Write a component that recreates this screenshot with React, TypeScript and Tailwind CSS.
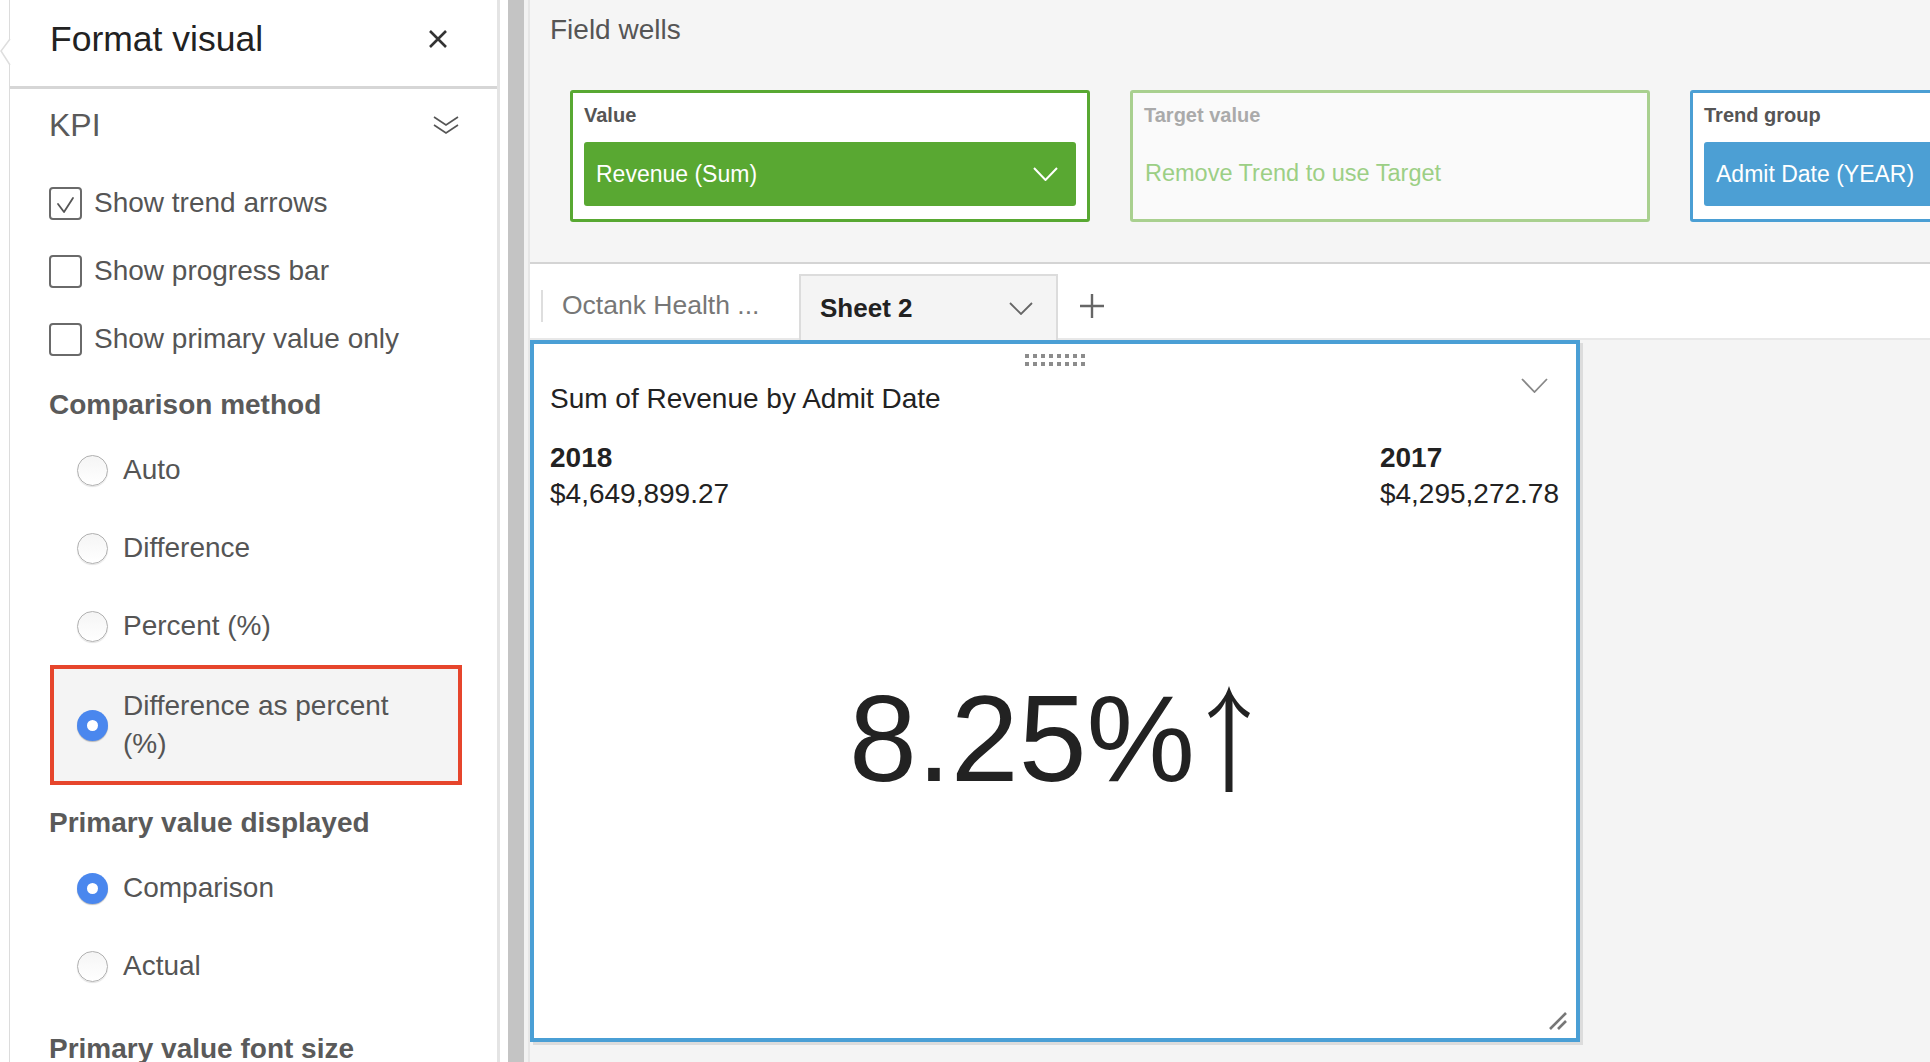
import React from 'react';

const CheckBox: React.FC<{ checked?: boolean; label: string }> = ({ checked, label }) => (
  <div className="flex h-[68px] shrink-0 items-center pl-[40px]">
    <span className="flex h-[33px] w-[33px] items-center justify-center rounded-[4px] border-2 border-[#6a6a6a] bg-white">
      {checked && (
        <svg width="29" height="29" viewBox="0 0 29 29" fill="none">
          <path d="M7 15 L13 23 L22 9" stroke="#555" strokeWidth="1.8" strokeLinecap="round" strokeLinejoin="round" />
        </svg>
      )}
    </span>
    <span className="ml-[12px] text-[28px] leading-[32px] text-[#555]">{label}</span>
  </div>
);

const Radio: React.FC<{ selected?: boolean }> = ({ selected }) =>
  selected ? (
    <span className="flex h-[31px] w-[31px] shrink-0 items-center justify-center rounded-full bg-[#4a87ee] shadow-[0_1px_1px_rgba(0,0,0,0.25)]">
      <span className="h-[11px] w-[11px] rounded-full bg-white" />
    </span>
  ) : (
    <span className="h-[31px] w-[31px] shrink-0 rounded-full border border-[#b0b0b0] bg-linear-to-b from-[#f5f5f5] to-white shadow-[0_1px_1px_rgba(0,0,0,0.12)]" />
  );

const RadioRow: React.FC<{ selected?: boolean; label: string }> = ({ selected, label }) => (
  <div className="flex h-[78px] shrink-0 items-center pl-[68px]">
    <Radio selected={selected} />
    <span className="ml-[15px] text-[28px] leading-[32px] text-[#555]">{label}</span>
  </div>
);

const SectionTitle: React.FC<{ children: React.ReactNode; className?: string }> = ({ children, className }) => (
  <div className={`flex shrink-0 items-center pl-[40px] text-[28px] font-bold leading-[32px] text-[#5a5a5a] ${className ?? ''}`}>{children}</div>
);

const Chevron: React.FC<{ color: string; w?: number; h?: number; sw?: number }> = ({ color, w = 24, h = 13, sw = 2 }) => (
  <svg width={w} height={h} viewBox={`0 0 ${w} ${h}`} fill="none">
    <path d={`M1 1 L${w / 2} ${h - 1} L${w - 1} 1`} stroke={color} strokeWidth={sw} strokeLinejoin="miter" />
  </svg>
);

const FieldWell: React.FC<{
  label: string;
  border: string;
  bg: string;
  labelColor: string;
  children: React.ReactNode;
}> = ({ label, border, bg, labelColor, children }) => (
  <div className={`flex h-[132px] w-[520px] shrink-0 flex-col rounded-[3px] border-[3px] px-[11px] pt-[10px] ${border} ${bg}`}>
    <div className={`text-[20px] font-bold leading-[24px] ${labelColor}`}>{label}</div>
    <div className="mt-[15px] h-[64px]">{children}</div>
  </div>
);

const App: React.FC = () => {
  return (
    <div className="flex h-[1062px] w-[1930px] overflow-hidden bg-white font-['Liberation_Sans',Arial,sans-serif]">
      {/* format visual panel */}
      <aside className="relative w-[508px] shrink-0 overflow-hidden bg-white">
        <svg className="absolute left-0 top-[38px] z-10" width="11" height="28" viewBox="0 0 11 28" fill="none">
          <path d="M10 1 L1 13 L10 27" stroke="#dedede" strokeWidth="1.5" fill="white" />
        </svg>
        <div className="ml-[9px] flex h-full w-[491px] flex-col border-l border-r-[3px] border-l-[#dcdcdc] border-r-[#e4e4e4]">
          <div className="flex h-[89px] shrink-0 items-center justify-between border-b-[3px] border-[#d6d6d6] pb-[8px] pl-[40px] pr-[49px]">
            <span className="text-[35.5px] leading-[40px] text-[#222]">Format visual</span>
            <svg width="20" height="18" viewBox="0 0 20 18" fill="none">
              <path d="M2 1 L18 17 M18 1 L2 17" stroke="#333" strokeWidth="2.6" />
            </svg>
          </div>

          <div className="-ml-px flex h-[80px] shrink-0 items-center justify-between pb-[8px] pl-[40px] pr-[38px]">
            <span className="text-[32px] leading-[36px] text-[#5a5a5a]">KPI</span>
            <svg width="26" height="21" viewBox="0 0 26 21" fill="none">
              <path d="M1 2 L13 10 L25 2 M1 10 L13 18 L25 10" stroke="#555" strokeWidth="1.6" />
            </svg>
          </div>

          <div className="-ml-px flex shrink-0 flex-col">
            <CheckBox checked label="Show trend arrows" />
            <CheckBox label="Show progress bar" />
            <CheckBox label="Show primary value only" />

            <SectionTitle className="h-[58px] pb-[2px] pt-[8px]">Comparison method</SectionTitle>
            <RadioRow label="Auto" />
            <RadioRow label="Difference" />
            <RadioRow label="Percent (%)" />

            <div className="ml-[41px] flex h-[120px] w-[412px] shrink-0 items-center border-4 border-[#e6452c] bg-[#f4f4f4] pl-[23px]">
              <Radio selected />
              <span className="ml-[15px] text-[28px] leading-[38px] text-[#555]">
                Difference as percent
                <br />
                (%)
              </span>
            </div>

            <SectionTitle className="h-[64px] pt-[12px]">Primary value displayed</SectionTitle>
            <RadioRow selected label="Comparison" />
            <RadioRow label="Actual" />
            <SectionTitle className="h-[88px]">Primary value font size</SectionTitle>
          </div>
        </div>
      </aside>

      {/* splitter */}
      <div className="w-[16px] shrink-0 bg-[#c4c4c4]" />
      <div className="w-[4px] shrink-0 bg-[#f2f2f2]" />

      <main className="flex min-w-0 flex-1 flex-col border-l-2 border-[#e6e6e6] bg-[#f4f4f4]">
        {/* field wells */}
        <section className="h-[264px] shrink-0 border-b-2 border-[#d4d4d4] bg-[#f5f5f5]">
          <div className="pl-[20px] pt-[14px] text-[28px] leading-[32px] text-[#555]">Field wells</div>
          <div className="mt-[44px] flex gap-[40px] pl-[40px]">
            <FieldWell label="Value" border="border-[#58a832]" bg="bg-white" labelColor="text-[#555]">
              <div className="flex h-full items-center justify-between rounded-[3px] bg-[#59a832] pl-[12px] pr-[18px]">
                <span className="text-[23px] text-white">Revenue (Sum)</span>
                <Chevron color="#fff" w={25} h={14} sw={2} />
              </div>
            </FieldWell>
            <FieldWell label="Target value" border="border-[#a9d08f]" bg="bg-[#fafafa]" labelColor="text-[#aaa]">
              <div className="flex h-full items-center pl-[1px]">
                <span className="text-[23.5px] text-[#9ccf85]">Remove Trend to use Target</span>
              </div>
            </FieldWell>
            <FieldWell label="Trend group" border="border-[#4b9fd4]" bg="bg-white" labelColor="text-[#555]">
              <div className="flex h-full items-center rounded-[3px] bg-[#4c9fd4] pl-[12px]">
                <span className="text-[23px] text-white">Admit Date (YEAR)</span>
              </div>
            </FieldWell>
          </div>
        </section>

        {/* sheet tabs */}
        <div className="flex h-[76px] shrink-0 items-end bg-white">
          <div className="flex h-[66px] w-[269px] items-center border-b-2 border-[#e8e8e8]">
            <span className="ml-[11px] h-[32px] w-[2px] bg-[#dedede]" />
            <span className="ml-[19px] text-[26.5px] text-[#777]">Octank Health ...</span>
          </div>
          <div className="flex h-[66px] w-[259px] items-center justify-between border-2 border-b-0 border-[#dcdcdc] bg-[#f4f4f4] pl-[19px] pr-[23px]">
            <span className="text-[26px] font-bold text-[#222]">Sheet 2</span>
            <Chevron color="#666" w={24} h={13} sw={1.8} />
          </div>
          <div className="flex h-[66px] flex-1 items-center border-b-2 border-[#e8e8e8] pl-[21px]">
            <svg width="26" height="26" viewBox="0 0 26 26" fill="none">
              <path d="M13 1 V25 M1 13 H25" stroke="#666" strokeWidth="2.4" />
            </svg>
          </div>
        </div>

        {/* canvas */}
        <div className="flex-1 bg-[#f4f4f4]">
          <div className="relative flex h-[702px] w-[1050px] flex-col border-4 border-[#4a9fd5] bg-white shadow-[3px_3px_0_0_#dcdcdc]">
            <div className="absolute left-1/2 top-[10px] grid -translate-x-1/2 grid-cols-8 gap-[4px]">
              {Array.from({ length: 16 }).map((_, i) => (
                <span key={i} className="h-[4px] w-[4px] bg-[#8c8c8c]" />
              ))}
            </div>
            <div className="absolute right-[28px] top-[34px]">
              <Chevron color="#888" w={27} h={15} sw={1.8} />
            </div>

            <div className="px-[16px] pt-[39px] text-[28px] leading-[32px] text-[#222]">Sum of Revenue by Admit Date</div>

            <div className="mt-[25px] flex justify-between pl-[16px] pr-[17px] text-[28px] leading-[36px] text-[#222]">
              <div>
                <div className="font-bold">2018</div>
                <div>$4,649,899.27</div>
              </div>
              <div>
                <div className="font-bold">2017</div>
                <div>$4,295,272.78</div>
              </div>
            </div>

            <div className="flex flex-1 items-center justify-center pb-[72px] pr-[10px]">
              <span className="text-[122px] leading-none text-[#222]">8.25%</span>
              <svg className="ml-[12px]" width="44" height="106" viewBox="0 0 44 106" fill="#222">
                <path d="M22 0 C19 11 10 22 1 27 L3.5 32 C10 28 16 22 18.5 15 L18.5 106 L25.5 106 L25.5 15 C28 22 34 28 40.5 32 L43 27 C34 22 25 11 22 0 Z" />
              </svg>
            </div>

            <svg className="absolute bottom-[8px] right-[9px]" width="18" height="18" viewBox="0 0 18 18" fill="none">
              <path d="M1 17 L17 1 M9 17 L17 9" stroke="#777" strokeWidth="2.6" />
            </svg>
          </div>
        </div>
      </main>
    </div>
  );
};

export default App;
